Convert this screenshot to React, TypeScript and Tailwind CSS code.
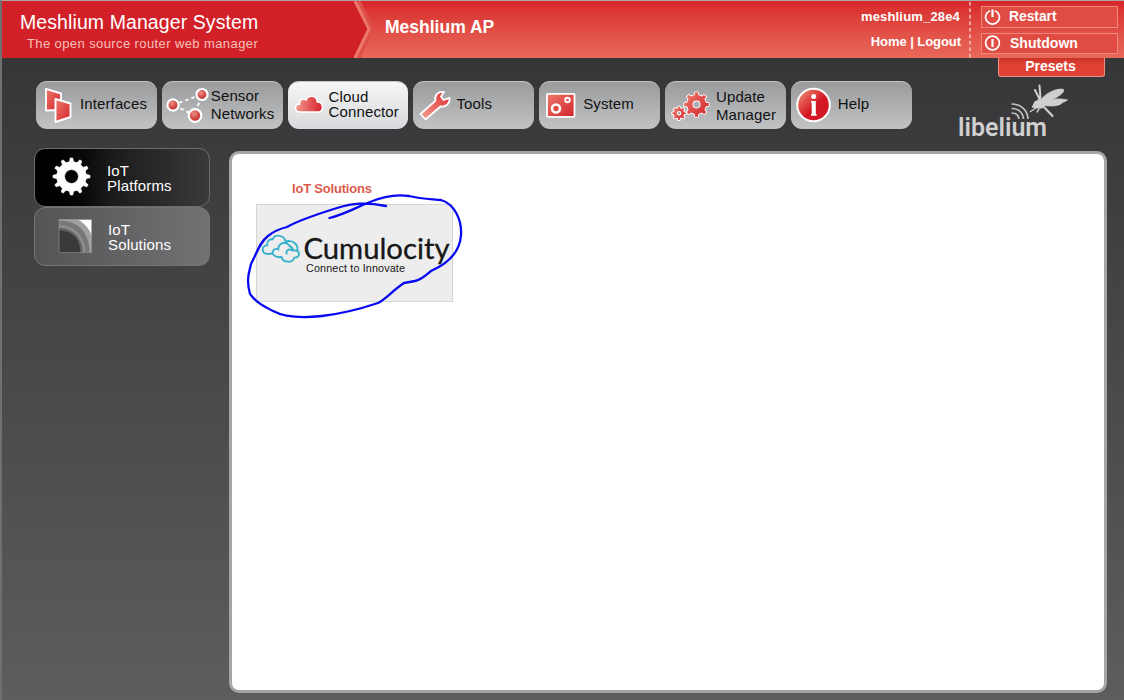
import React from "react";

function gearPath(cx: number, cy: number, outer: number, inner: number, teeth: number, hole: number, tip = 0.2, root = 0.3) {
  const step = (Math.PI * 2) / teeth;
  const pt = (r: number, a: number) => `${(cx + r * Math.sin(a)).toFixed(2)} ${(cy - r * Math.cos(a)).toFixed(2)}`;
  let d = "";
  for (let i = 0; i < teeth; i++) {
    const a = i * step;
    d += `${i ? "L" : "M"}${pt(inner, a - step * root)}L${pt(outer, a - step * tip)}L${pt(outer, a + step * tip)}L${pt(inner, a + step * root)}`;
  }
  return `${d}ZM${cx - hole} ${cy}a${hole} ${hole} 0 1 0 ${hole * 2} 0a${hole} ${hole} 0 1 0 ${-hole * 2} 0Z`;
}

function Icon({ width, children }: { width: number; children: React.ReactNode }) {
  return (
    <svg width={width} height={48} viewBox={`0 0 ${width} 48`} className="-mt-px shrink-0">
      {children}
    </svg>
  );
}

const InterfacesIcon = (
  <Icon width={44}>
    <g fill="url(#red)" stroke="#fff" strokeWidth="1.9" strokeLinejoin="round">
      <path d="M10 7.800L25 12.500V29L10 29.500Z" />
      <path d="M19.500 18L34.500 22.500V36L19.500 41Z" />
    </g>
  </Icon>
);

const SensorIcon = (
  <Icon width={50}>
    <path d="M11 24L39.500 13.500L33 34.500Z" fill="none" stroke="#fff" strokeWidth="1.800" strokeDasharray="3.500 3" />
    <g fill="url(#ball)" stroke="#fff" strokeWidth="2.200">
      <circle cx="11" cy="24" r="5.600" />
      <circle cx="40" cy="13.500" r="5.500" />
      <circle cx="33" cy="34.500" r="6.300" />
    </g>
  </Icon>
);

const CloudIcon = (
  <Icon width={42}>
    <path
      d="M12 31C6 31 6 23.500 11.500 23.300C10.500 18.500 16 17 18 19C20 13.500 29 14 29.300 21C36 21 36 31 30.500 31Z"
      fill="url(#cloud)"
      stroke="#fff"
      strokeWidth="1.600"
    />
  </Icon>
);

const ToolsIcon = (
  <Icon width={44}>
    <path
      d="M7.500 33L22.300 19.800C21.500 14.500 25 9.800 31 11L28 15.500L30.500 19L36.500 16.800C37.500 21.500 33 26.500 27.500 25.500L12.500 38.500Z"
      fill="url(#redH)"
      stroke="#fff"
      strokeWidth="1.800"
      strokeLinejoin="round"
    />
  </Icon>
);

const SystemIcon = (
  <Icon width={44}>
    <rect x="8" y="12.800" width="27.500" height="23" rx="1" fill="url(#red)" stroke="#fff" strokeWidth="1.800" />
    <g fill="#df4c49" stroke="#fff">
      <circle cx="17" cy="27.500" r="4" strokeWidth="2.500" />
      <circle cx="28.500" cy="19" r="2.300" strokeWidth="1.900" />
    </g>
  </Icon>
);

const UpdateIcon = (
  <Icon width={51}>
    <g fill="url(#red)" stroke="#fff" strokeWidth="1.800" strokeLinejoin="round" className="[paint-order:stroke]">
      <path fillRule="evenodd" d={gearPath(31.500, 23.500, 12.300, 9.600, 8, 4, 0.15, 0.24)} />
      <path fillRule="evenodd" d={gearPath(14, 32.300, 6.800, 5.100, 8, 2.400, 0.15, 0.24)} />
    </g>
  </Icon>
);

const HelpIcon = (
  <Icon width={47}>
    <circle cx="22.500" cy="24" r="16.300" fill="url(#help)" stroke="#fff" strokeWidth="2" />
    <circle cx="22.700" cy="15.400" r="2.500" fill="#fff" />
    <path d="M20 20H24.800V33H25.600V34.800H20V33H20.700V21.700H20Z" fill="#fff" />
  </Icon>
);

const navItems = [
  { lines: ["Interfaces"], icon: InterfacesIcon, leading: "leading-[18px] pb-1" },
  { lines: ["Sensor", "Networks"], icon: SensorIcon, leading: "leading-[18px] pb-px -ml-px" },
  { lines: ["Cloud", "Connector"], icon: CloudIcon, leading: "leading-[15px] pb-1 -ml-px" },
  { lines: ["Tools"], icon: ToolsIcon, leading: "leading-[18px] pb-1 -ml-px" },
  { lines: ["System"], icon: SystemIcon, leading: "leading-[18px] pb-1" },
  { lines: ["Update", "Manager"], icon: UpdateIcon, leading: "leading-[18px]" },
  { lines: ["Help"], icon: HelpIcon, leading: "leading-[18px] pb-1" },
];

const ACTIVE = "Cloud";

function Gradients() {
  return (
    <svg width="0" height="0" className="absolute">
      <defs>
        <linearGradient id="red" x1="0" y1="0" x2="1" y2="1">
          <stop offset="0" stopColor="#ef7a6b" />
          <stop offset="1" stopColor="#d2222c" />
        </linearGradient>
        <linearGradient id="redH" x1="0" y1="1" x2="1" y2="0">
          <stop offset="0" stopColor="#f4a295" />
          <stop offset="1" stopColor="#dc2b2b" />
        </linearGradient>
        <linearGradient id="cloud">
          <stop offset="0" stopColor="#f09a8c" />
          <stop offset="1" stopColor="#d71f2a" />
        </linearGradient>
        <radialGradient id="ball" cx=".4" cy=".35" r=".7">
          <stop offset="0" stopColor="#ef9087" />
          <stop offset=".6" stopColor="#cf4643" />
          <stop offset="1" stopColor="#b22828" />
        </radialGradient>
        <linearGradient id="help" x1=".1" y1=".1" x2=".7" y2=".7">
          <stop offset="0" stopColor="#f0826f" />
          <stop offset=".75" stopColor="#d31724" />
        </linearGradient>
      </defs>
    </svg>
  );
}

function Header() {
  return (
    <header className="relative flex h-[57px] shrink-0 bg-linear-to-b from-[#d7272b] to-[#e9685a] text-white">
      <div className="relative w-[370px]">
        <svg width="374" height="57" className="absolute inset-0">
          <path d="M0 0H352L366 28L352 57H0Z" fill="#d22029" />
          <path d="M356.500 0L370.500 28L356.500 57" fill="none" stroke="#df5048" strokeWidth="4" />
          <path d="M353 0L367 28L353 57" fill="none" stroke="#ec776a" strokeWidth="3" />
        </svg>
        <div className="relative pt-[9px] pl-[18px]">
          <div className="text-[19.500px] leading-6 tracking-[0.09px] whitespace-nowrap">Meshlium Manager System</div>
          <div className="pt-px pl-[7px] text-[13px] leading-[18px] tracking-[0.400px] whitespace-nowrap text-[#f7c0b8]">
            The open source router web manager
          </div>
        </div>
      </div>
      <div className="flex-1 pt-[15px] pl-[13px] text-[17.500px] leading-[22px] font-bold">Meshlium AP</div>
      <div className="flex w-[120px] flex-col items-end gap-[9px] pt-[8px] pr-[8px] text-[13px] leading-4 font-bold whitespace-nowrap">
        <div className="pr-px tracking-[0.170px]">meshlium_28e4</div>
        <div className="tracking-[-0.060px]">Home | Logout</div>
      </div>
      <svg width="2" height="57">
        <path d="M1 1V57" stroke="#f4c8c4" strokeWidth="1.500" strokeDasharray="3.500 3" />
      </svg>
      <div className="flex w-[153px] flex-col gap-[5px] pt-[5px] pr-[6px] pl-[10px] text-[14px] leading-[19px] font-bold">
        {["Restart", "Shutdown"].map((t, i) => (
          <div key={t} className="flex h-[21.500px] items-center border border-[#f1887f] bg-[#e04b43] pl-px">
            <svg width="18" height="18" viewBox="0 0 18 18" fill="none" stroke="#fff" strokeWidth="1.700" className="mr-[8px]">
              {i ? (
                <><circle cx="9.500" cy="9" r="6.900" /><path d="M9.500 5V13" strokeWidth="2.200" /></>
              ) : (
                <><path d="M7 2.700A6.900 6.900 0 1 0 12 2.700" /><path d="M9.500 1.500V9" strokeWidth="2.200" /></>
              )}
            </svg>
            <span className={i ? "pl-px tracking-[0.030px]" : "text-[13.800px]"}>{t}</span>
          </div>
        ))}
      </div>
      <div className="absolute top-[57px] right-[19px] h-[19px] w-[107px] rounded-b-[3px] border border-t-0 border-[#ed9085] bg-linear-to-b from-[#c93328] to-[#df4234] to-40% pr-[2px] text-center text-[14px] leading-[17px] font-bold">
        Presets
      </div>
    </header>
  );
}

function LibeliumLogo() {
  return (
    <svg width="114" height="60" viewBox="956 82 114 60" className="mt-6 ml-[45px]">
      <text x="957" y="136" textLength="89" lengthAdjust="spacingAndGlyphs" fill="#cfcfcf" fontFamily="Roboto, sans-serif" fontWeight="600" fontSize="26.500">
        libelium
      </text>
      <g fill="none" stroke="#c2c2c2" strokeWidth="1.700">
        <path d="M1010.500 104C1020 104 1026.500 110 1027 119" />
        <path d="M1010.500 108.500C1018 108.500 1022 113 1022.500 119" />
        <path d="M1010.500 113C1015 113 1017.500 115.500 1018 119" />
      </g>
      <g fill="#cfcfcf" stroke="#cfcfcf" strokeLinecap="round">
        <path d="M1039 101C1044 93 1057 87.500 1062.500 89.500C1064.500 92 1056 99 1041 103Z" strokeWidth=".8" />
        <path d="M1041 102C1050 98 1061 98.500 1066.500 100C1064 102 1061 102 1060 104C1054 107 1046 106 1041 105Z" strokeWidth=".8" />
        <path d="M1034 102L1039 99L1043 103L1041 108L1036 108L1031.500 107Z" strokeWidth="1.200" />
        <path d="M1038.500 99L1034 90M1039.500 98L1038.500 85.500" fill="none" strokeWidth="2" />
        <path d="M1042 106L1051.500 116" fill="none" strokeWidth="2.200" />
        <path d="M1035 108L1029.500 111.500M1038 109L1036 112" fill="none" strokeWidth="1.400" />
      </g>
    </svg>
  );
}

function Sidebar() {
  return (
    <aside className="w-[176px] shrink-0 text-[15px] leading-[14.500px] text-white">
      <div className="flex h-[59px] items-center rounded-[11px] border border-[#6b6b6d] bg-linear-to-r from-black via-[#1c1c1d] via-45% to-[#3a3a3c]">
        <svg width="72" height="57" viewBox="0 0 72 57">
          <path d={gearPath(36.500, 27.500, 18.500, 14.800, 12, 7, 0.12, 0.26)} fill="#fff" fillRule="evenodd" stroke="#fff" strokeWidth=".8" strokeLinejoin="round" />
        </svg>
        <div className="pt-[2px] tracking-[0.150px]">IoT<br />Platforms</div>
      </div>
      <div className="flex h-[59px] items-center rounded-[11px] border border-[#747476] bg-linear-to-r from-[#545456] to-[#727274]">
        <svg width="73" height="57" viewBox="0 0 73 57">
          <rect x="24" y="11.500" width="33" height="33.500" fill="#fff" />
          <path d="M24 11.500H43C49 15 56 22 57 30V45H24Z" fill="#a0a0a2" />
          <path d="M24 12.500C43 12.500 54.500 24 54.500 45H24Z" fill="#77777a" />
          <path d="M24 17C40 17 50.500 28 50.500 45H24Z" fill="#8b8b8d" />
          <path d="M24 20C38 20 47.500 30 47.500 45H24Z" fill="#606062" />
          <path d="M24 22.500C38 22.500 46 32 45 45H24Z" fill="#39393b" />
          <rect x="24" y="11.500" width="32.500" height="33" fill="none" stroke="#89898b" strokeWidth=".7" />
        </svg>
        <div className="pt-[2px] tracking-[0.150px]">IoT<br />Solutions</div>
      </div>
    </aside>
  );
}

function CumulocityCard() {
  return (
    <div className="h-[98px] w-[197px] border border-[#d5d5d5] bg-[#ededed]">
      <svg width="195" height="96" viewBox="257 205 195 96">
        <g transform="translate(250 225) scale(.3333)" fill="none" stroke="#35b0cb" strokeWidth="5.500" strokeLinecap="round">
          <path d="M66 86C54 88 37 88 38 73C39 64 46 61 52 61C49 48 58 42 68 43C74 27 104 28 107 51C125 43 146 56 142 78" />
          <path d="M95 96C76 100 62 86 70 76C74 71 80 71 85 73C84 56 106 46 117 61C126 66 129 71 130 77C150 71 154 98 133 98C128 115 99 114 95 96" />
          <path d="M110 86C107 76 117 70 125 76M107 51L116 47" />
        </g>
        <text x="303.500" y="258.500" textLength="146" lengthAdjust="spacingAndGlyphs" fontFamily="Lato, sans-serif" fontSize="28" fill="#171717" stroke="#171717" strokeWidth=".3">
          Cumulocity
        </text>
        <text x="306" y="272" textLength="99" fontFamily="Liberation Sans, sans-serif" fontSize="10.800" fill="#171717">
          Connect to Innovate
        </text>
      </svg>
    </div>
  );
}

export default function App() {
  return (
    <div className="relative flex h-[700px] w-[1124px] flex-col overflow-hidden border-t border-l-2 border-t-[#b0a5a5] border-l-[#707072] bg-linear-to-b from-[#363638] from-[8%] to-[#5d5d5f] font-['Liberation_Sans',Arial,sans-serif]">
      <Gradients />
      <Header />
      <div className="flex h-[90px] shrink-0">
        <nav className="flex gap-[5px] pt-[23px] pl-[34px]">
          {navItems.map((n) => (
            <div
              key={n.lines[0]}
              className={`flex h-[48px] w-[120.800px] items-center rounded-[11px] border-t border-[#c4c5c7] bg-linear-to-b text-[15px] tracking-[0.120px] text-[#111] ${n.lines[0] === ACTIVE ? "from-[#f6f6f6] to-[#d7d9dc]" : "from-[#9a9b9d] to-[#c2c3c5]"}`}
            >
              {n.icon}
              <div className={n.leading}>
                {n.lines.map((l) => <div key={l}>{l}</div>)}
              </div>
            </div>
          ))}
        </nav>
        <LibeliumLogo />
      </div>
      <div className="flex min-h-0 flex-1 gap-[19px] pl-8">
        <Sidebar />
        <main className="mt-[2.500px] h-[542px] w-[878px] rounded-[10px] border-3 border-[#a5a5a6] bg-white pt-[26px] pl-[24px]">
          <h2 className="mb-[7px] pl-[36px] text-[13px] leading-[17px] font-bold tracking-[-0.200px] text-[#dc5b4c]">IoT Solutions</h2>
          <CumulocityCard />
        </main>
      </div>
      <svg width="230" height="150" viewBox="240 175 230 150" className="pointer-events-none absolute top-[174px] left-[238px]">
        <path
          d="M329.500 218C346 214 359 206 370 202C384 196 396 194 409 196C422 199 432 199 441 200C454 204 462 219 461 235C460 252 449 263 431 271C425 276 421 280 415 281L404 283C392 291 386 299 378 303C360 309 340 314 322 316C304 318 286 318 273 311C263 306 256 302 250 294C246 279 249 273 251 264C257 253 259 243 268 236C274 231 279 229 287 227C299 220 321 213 337 208C353 203 366 202 386 206"
          fill="none"
          stroke="#0808f2"
          strokeWidth="2.300"
          strokeLinecap="round"
          strokeLinejoin="round"
        />
      </svg>
    </div>
  );
}
